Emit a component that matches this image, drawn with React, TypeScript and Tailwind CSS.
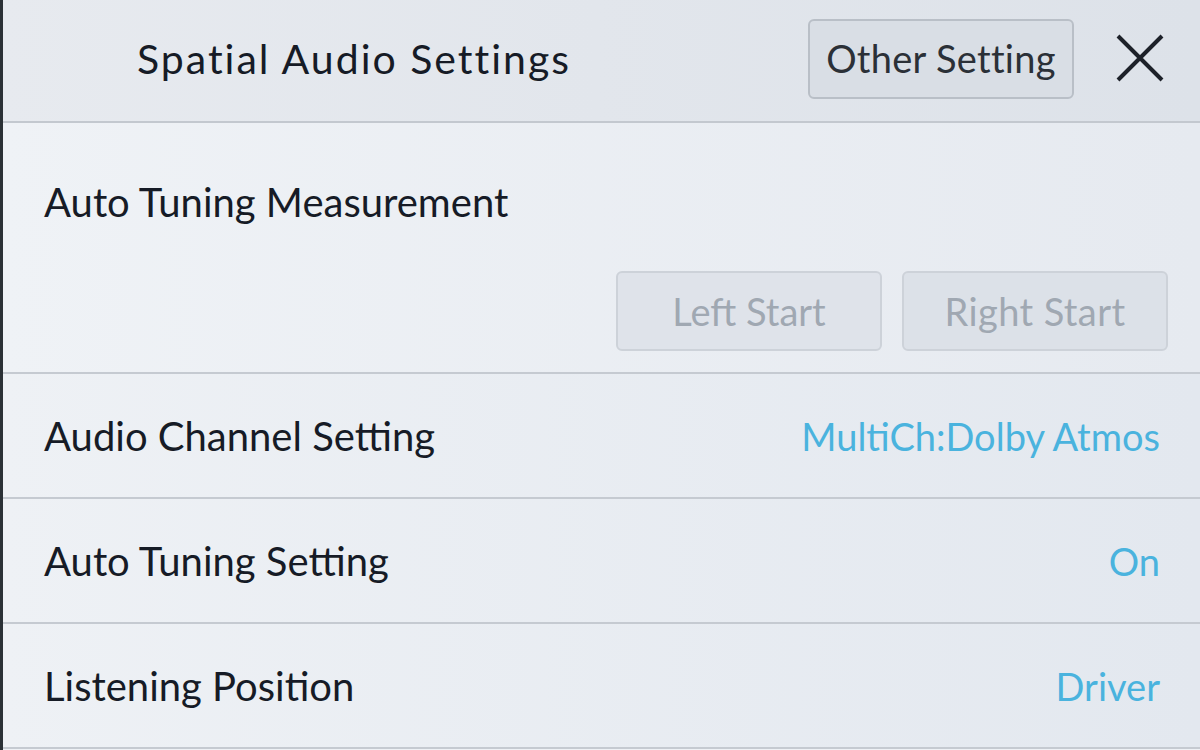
const rows = [
  { label: 'Audio Channel Setting', value: 'MultiCh:Dolby Atmos' },
  { label: 'Auto Tuning Setting', value: 'On' },
  { label: 'Listening Position', value: 'Driver' },
];

export default function App() {
  return (
    <div
      className="w-[1200px] h-[750px] overflow-hidden flex flex-col bg-[#eef1f5] border-l-[3px] border-[#2b3136] text-[#161b26]"
      style={{ fontFamily: 'Lato, "Open Sans", sans-serif' }}
    >
      {/* Header */}
      <div className="h-[123px] shrink-0 flex items-center bg-gradient-to-r from-[#e7eaef] to-[#dde2e9] border-b-2 border-[#c3c8cf] pl-[134px] pr-[36px]">
        <h1 className="text-[41px] leading-none tracking-[2px] flex-1 -mt-[4px]">Spatial Audio Settings</h1>
        <button className="w-[266px] h-[80px] mb-[4px] rounded-[6px] border-2 border-[#b9bfc7] bg-[#d9dee5] text-[38px] text-[#2b3037] tracking-[0.3px]">
          Other Setting
        </button>
        <svg className="w-[48px] h-[48px] ml-[42px] mb-[6px]" viewBox="0 0 48 48" fill="none" stroke="#1d2129" strokeWidth="4">
          <path d="M2 2 L46 46 M46 2 L2 46" />
        </svg>
      </div>

      {/* Measurement row */}
      <div className="h-[251px] shrink-0 flex flex-col border-b-2 border-[#c5cad1] pl-[41px] pr-[32px] bg-gradient-to-r from-[#eff2f6] to-[#e6eaf0]">
        <div className="text-[40px] leading-none mt-[59px]">Auto Tuning Measurement</div>
        <div className="flex justify-end gap-[20px] mt-[49px]">
          <button className="w-[266px] h-[80px] rounded-[6px] border-2 border-[#cdd2d9] bg-[#dfe3ea] text-[38px] text-[#a0a8b2]">
            Left Start
          </button>
          <button className="w-[266px] h-[80px] rounded-[6px] border-2 border-[#cdd2d9] bg-[#dce1e8] text-[38px] text-[#a0a8b2] tracking-[0.4px]">
            Right Start
          </button>
        </div>
      </div>

      {rows.map((r) => (
        <div
          key={r.label}
          className="h-[125px] shrink-0 flex items-center justify-between border-b-2 border-[#c5cad1] pl-[41px] pr-[40px] bg-gradient-to-r from-[#eef1f5] to-[#e3e8ef]"
        >
          <span className="text-[40px] leading-none">{r.label}</span>
          <span className="text-[38px] leading-none text-[#4ab3de]">{r.value}</span>
        </div>
      ))}
    </div>
  );
}
